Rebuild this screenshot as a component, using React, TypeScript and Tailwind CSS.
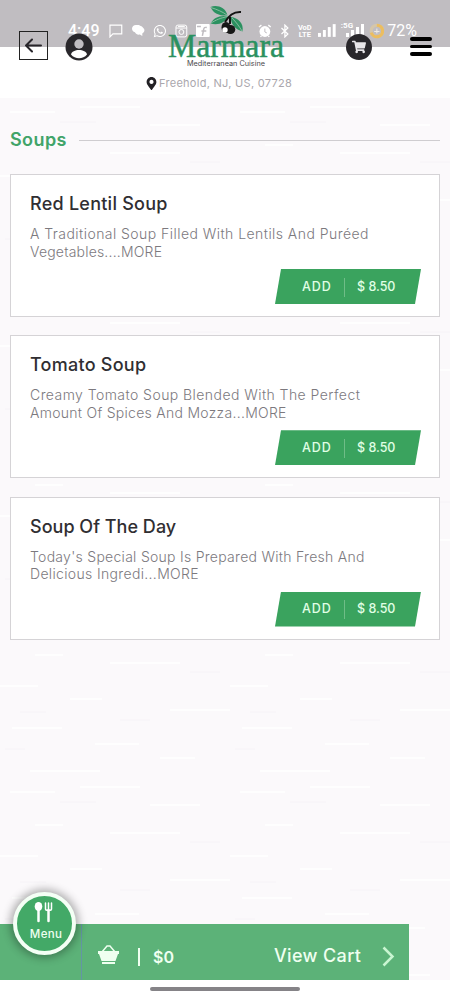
import React from 'react';
import { FaShoppingCart, FaMapMarkerAlt, FaWhatsapp } from 'react-icons/fa';

const soups = [
  {
    name: 'Red Lentil Soup',
    nameClass: 'tracking-[0.25px]',
    lines: [
      { text: 'A Traditional Soup Filled With Lentils And Puréed', className: 'block tracking-[0.45px]' },
      { text: 'Vegetables....MORE', className: 'block tracking-[0.2px]' },
    ],
    price: '$ 8.50',
  },
  {
    name: 'Tomato Soup',
    nameClass: 'tracking-[0.25px]',
    lines: [
      { text: 'Creamy Tomato Soup Blended With The Perfect', className: 'block tracking-[0.44px]' },
      { text: 'Amount Of Spices And Mozza...MORE', className: 'block tracking-[0.28px]' },
    ],
    price: '$ 8.50',
  },
  {
    name: 'Soup Of The Day',
    nameClass: 'tracking-[0.02px]',
    lines: [
      { text: "Today's Special Soup Is Prepared With Fresh And", className: 'block tracking-[0.28px]' },
      { text: 'Delicious Ingredi...MORE', className: 'block tracking-[0.34px]' },
    ],
    price: '$ 8.50',
  },
];

const Signal = () => (
  <svg width="18" height="13" viewBox="0 0 18 13" fill="white">
    <rect x="0" y="9" width="3" height="4" />
    <rect x="5" y="6" width="3" height="7" />
    <rect x="10" y="3" width="3" height="10" />
    <rect x="15" y="0" width="3" height="13" />
  </svg>
);

const StatusBar = () => (
  <div className="col-start-1 row-start-1 flex h-[47px] items-start bg-[#c0bdc1] pt-[22px] text-white">
    <div className="ml-[68px] flex h-[17px] w-[349px] items-center">
      <span className="w-[42px] font-[Roboto] text-[16px] leading-none font-medium">4:49</span>
      <svg className="mr-[9px]" width="14" height="14" viewBox="0 0 14 14" fill="none" stroke="white" strokeWidth="1.2">
        <path d="M1 1h12v9H4l-3 3z" />
      </svg>
      <svg className="mr-[8px]" width="13" height="13" viewBox="0 0 13 13" fill="white">
        <path d="M4 1C1.800 1 0 2.600 0 4.600c0 1.500 1.200 3.200 3 3.700 1 2.200 3 2.700 5 2.300L10.500 12v-2.400c2.300-1.300 3-4 1-5.600C10.500 2.500 9 2 8 1.500 7 .8 5.500 1 4 1z" />
      </svg>
      <FaWhatsapp className="mr-[9px]" size={14} />
      <svg className="mr-[8px]" width="13" height="14" viewBox="0 0 13 14" fill="none" stroke="white">
        <rect x="1" y="1" width="11" height="12" rx="2" />
        <path d="M1 4h11M3 2.500h7" />
        <circle cx="6.500" cy="8" r="2.500" />
      </svg>
      <svg className="mr-[48px]" width="14" height="13" viewBox="0 0 14 13">
        <rect width="14" height="13" rx="1" fill="white" />
        <path d="M11 3.500c-2-.5-3 0-3.200 2L6.500 12M5.500 7h5M1 2.500h4" fill="none" stroke="#c0bdc1" strokeWidth="1.500" />
      </svg>
      <svg className="mr-[8px]" width="14" height="14" viewBox="0 0 14 14">
        <circle cx="7" cy="7.500" r="5.500" fill="white" />
        <path d="M1 3l2.500-2M13 3l-2.500-2M2.500 13l1-1M11.500 13l-1-1" stroke="white" strokeWidth="1.400" />
        <path d="M7 4.500v3.500l2 1" fill="none" stroke="#c0bdc1" />
      </svg>
      <svg className="mr-[8px]" width="10" height="14" viewBox="0 0 10 14" fill="none" stroke="white" strokeWidth="1.300">
        <path d="M1.500 4l6.500 6-3 3V1l3 3-6.500 6" />
      </svg>
      <span className="mr-[6px] flex w-[15px] flex-col text-center font-[Roboto] text-[7.500px] leading-[7px] font-bold">
        <span>VoD</span>
        <span>LTE</span>
      </span>
      <Signal />
      <span className="ml-[5px] w-[13px] self-start font-[Roboto] text-[8px] leading-[8px] font-bold whitespace-nowrap">:5G</span>
      <span className="-ml-[8px]"><Signal /></span>
      <svg className="ml-[5px]" width="16" height="16" viewBox="0 0 15 15" fill="none">
        <circle cx="7.500" cy="7.500" r="5.500" stroke="#d5c6aa" strokeWidth="3" />
        <path d="M7.500 2a5.500 5.500 0 1 1-5.300 7" stroke="#ebbd60" strokeWidth="3" />
        <path d="M5 8h5M7.500 5v5" stroke="#eeeae5" />
      </svg>
      <span className="ml-[3px] font-[Roboto] text-[16px] leading-none">72%</span>
    </div>
  </div>
);

const Logo = () => (
  <svg className="overflow-visible" width="120" height="68" viewBox="166 2 120 68">
    <g fill="#2b9160">
      <path d="M210.500 7c6-2.500 15 0 17 8.500-7 .5-13.500-1-17-8.500z" />
      <path d="M210.500 23.500c3-6 10-9 18-7-3 5.500-10 9.500-18 7z" />
      <path d="M231 17c7 1 13 6 11.500 14.500-7-2-12-7-11.500-14.500z" />
    </g>
    <path d="M211 7.500c6 2 11 4 16 7.500M211 23c5-3 9-5 17-6.500M232 18c4 4 7 8 10 13" stroke="#9dc5af" strokeWidth=".8" fill="none" />
    <path d="M241 12c-8-.5-12 4-16 10M230 17v7" stroke="#141414" strokeWidth="2" fill="none" />
    <ellipse cx="226" cy="27.500" rx="4.500" ry="5.500" fill="#171717" />
    <ellipse cx="230.500" cy="29.500" rx="4.800" ry="4.500" fill="#171717" />
    <circle cx="225" cy="30" r="2.700" fill="white" />
    <text x="168" y="57" textLength="116" lengthAdjust="spacingAndGlyphs" fontSize="33" fill="#2b9160" stroke="#2b9160" strokeWidth=".5" className="font-['Liberation_Serif',serif]">
      Marmara
    </text>
    <text x="187" y="66" textLength="78" lengthAdjust="spacingAndGlyphs" fontSize="7" fill="#4a484b" className="font-[Inter,sans-serif]">
      Mediterranean Cuisine
    </text>
  </svg>
);

const Header = () => (
  <header className="grid h-[98px] grid-cols-1 content-start bg-white shadow-[0_1px_2px_rgba(0,0,0,0.03)]">
    <StatusBar />
    <div className="relative col-start-1 row-start-1 flex h-[70px] items-start">
      <button className="mt-[31px] ml-[19px] flex h-[29px] w-[29px] items-center justify-center border border-[#222]">
        <svg width="17" height="15" viewBox="0 0 17 15" fill="none" stroke="#27252a" strokeWidth="2" strokeLinecap="round" strokeLinejoin="round">
          <path d="M16 7.500H1M7 1.500l-6 6 6 6" />
        </svg>
      </button>
      <svg className="mt-[33px] ml-[17px]" width="28" height="28" viewBox="0 0 28 28">
        <circle cx="14" cy="14" r="13.500" fill="#29272b" />
        <circle cx="14" cy="11" r="4.700" fill="#c0bdc1" />
        <path d="M6 21.500c1-6 15-6 16 0-4 5-12 5-16 0z" fill="white" />
      </svg>
      <div className="mt-[2px] ml-[73px]"><Logo /></div>
      <div className="mt-[34px] ml-[60px] flex h-[26px] w-[26px] items-center justify-center rounded-full bg-[#29272b] text-[#e8e6e9]">
        <FaShoppingCart size={14} />
      </div>
      <div className="mt-[37px] ml-[38px] flex w-[22px] flex-col gap-1">
        <span className="h-[3.500px] rounded-xs bg-black" />
        <span className="h-[3.500px] rounded-xs bg-black" />
        <span className="h-[3.500px] rounded-xs bg-black" />
      </div>
    </div>
    <p className="flex items-center pt-[5px] pl-[145px] text-[11px] leading-4 text-[#aaa7ad]">
      <FaMapMarkerAlt className="mr-[1px] text-[#222024]" size={13} />
      <span className="tracking-[0.28px] whitespace-nowrap">Freehold, NJ, US, 07728</span>
    </p>
  </header>
);

// faint paper grain behind the list
const Texture = () => (
  <svg className="absolute inset-0 h-full w-full" aria-hidden="true">
    <defs>
      <pattern id="grain" width="230" height="170" patternUnits="userSpaceOnUse">
        <path
          d="M10 14h45M80 9h60M150 27h50M35 47h28M110 55h70M0 78h38M70 91h32M170 102h60M12 120h50M95 136h44M160 150h35M30 163h70"
          stroke="white"
          strokeWidth="1.500"
        />
        <path d="M60 24h36M190 64h30M20 104h26M120 112h30M5 141h20" stroke="#f6f3f7" />
      </pattern>
    </defs>
    <rect width="100%" height="100%" fill="url(#grain)" />
  </svg>
);

const App = () => {
  return (
    <div className="flex h-[1000px] w-[450px] flex-col overflow-hidden bg-white font-[Inter,sans-serif]">
      <Header />

      <div className="relative flex h-[882px] shrink-0 flex-col bg-[#fbf9fb]">
        <Texture />
        <main className="relative flex flex-1 flex-col px-[10px] pt-[31px]">
          <div className="flex items-center">
            <h1 className="w-[69px] text-[18px] leading-[22px] font-semibold tracking-[0.4px] text-[#41a469]">Soups</h1>
            <span className="h-px flex-1 bg-[#cfcdd0]" />
          </div>

          <div className="mt-[23px] flex flex-col gap-[18.300px]">
            {soups.map((soup) => (
              <div key={soup.name} className="flex h-[143px] flex-col border border-[#d5d3d6] bg-white pt-[18px] pr-[18px] pl-[19px]">
                <h2 className={`text-[18px] leading-[22px] font-medium text-[#302e32] ${soup.nameClass}`}>{soup.name}</h2>
                <p className="mt-[10px] text-[14px] leading-[17.500px] font-light whitespace-nowrap text-[#7c797e]">
                  {soup.lines.map((line) => (
                    <span key={line.text} className={line.className}>{line.text}</span>
                  ))}
                </p>
                <button className="mt-[9px] flex h-[35px] w-[146px] items-center self-end bg-[#3aa35e] pt-px text-[12.500px] font-medium text-[#e0ffe5] [clip-path:polygon(6px_0,100%_0,140px_100%,0_100%)]">
                  <span className="ml-[27px] w-[42px] text-left tracking-[0.9px]">ADD</span>
                  <span className="h-[19px] w-px bg-[#6fbd87]" />
                  <span className="ml-[12px]">{soup.price}</span>
                </button>
              </div>
            ))}
          </div>
        </main>

        <footer className="relative flex h-14 w-[409px] shrink-0 items-center bg-[#5cb278] text-[#effff0]">
          <div className="h-full w-[82px] border-r border-[#6495a5]" />
          <svg className="mt-[5px] ml-[16px]" width="21" height="20" viewBox="0 0 21 20">
            <path d="M4 7l5-6h3l5 6" fill="none" stroke="#effff0" strokeWidth="1.500" />
            <path d="M0 6h21v3h-1l-2.500 7h-14L1 9H0zM4 17h13v2H4z" fill="#effff0" />
          </svg>
          <span className="mt-[10px] ml-[19px] h-[18px] w-[2px] bg-[#effff0]" />
          <span className="mt-[10px] ml-[13px] w-[121px] text-[16px] font-semibold">$0</span>
          <span className="mt-[6px] w-[108px] text-[18px] font-medium tracking-[0.35px] whitespace-nowrap">View Cart</span>
          <svg className="mt-[9px]" width="13" height="21" viewBox="0 0 13 21" fill="none" stroke="#c9f5d1" strokeWidth="2.500">
            <path d="M1.500 1.500l9 9-9 9" />
          </svg>

          {/* floating menu button */}
          <button className="absolute -top-8 left-[13px] flex h-[63px] w-[63px] flex-col items-center rounded-full border-4 border-[#f4fff5] bg-[#43a967] pt-[6px] shadow-[0_0_9px_3px_rgba(0,0,0,0.3)]">
            <svg className="-ml-[2px]" width="19" height="21" viewBox="0 0 19 21" fill="none" stroke="white" strokeLinecap="round">
              <ellipse cx="4.500" cy="4.500" rx="3.800" ry="4.500" fill="white" stroke="none" />
              <path d="M4.500 7v12" strokeWidth="2.500" />
              <path d="M11.500 1v6c0 2 6 2 6 0V1M14.500 1v7" strokeWidth="1.500" />
              <path d="M14.500 8v11" strokeWidth="2.500" />
            </svg>
            <span className="mt-[4px] ml-[3px] text-[11.500px] leading-[15px] font-medium tracking-[0.3px]">Menu</span>
          </button>
        </footer>
      </div>

      <div className="flex h-5 shrink-0 justify-center pt-[7px]">
        <span className="h-1 w-[150px] rounded-full bg-[#858387]" />
      </div>
    </div>
  );
};

export default App;
